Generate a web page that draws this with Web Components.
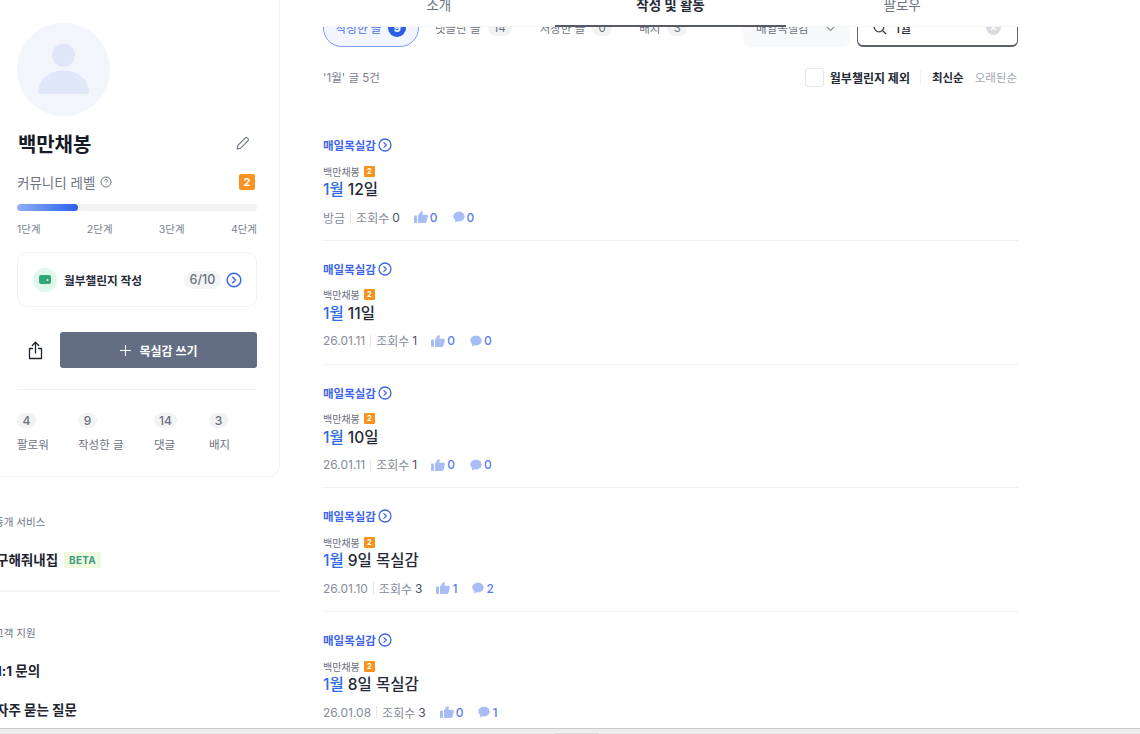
<!DOCTYPE html>
<html lang="ko">
<head>
<meta charset="utf-8">
<title>작성 및 활동</title>
<style>
  html, body { margin: 0; height: 734px; overflow: hidden; background: #fff; }
  body { font-family: Inter, "Noto Sans CJK KR", sans-serif; color: #1c2230; }
</style>
</head>
<body>
<app-page>
  <side-bar slot="side"></side-bar>
  <tab-bar slot="main"></tab-bar>
  <filter-bar slot="main"></filter-bar>
  <sort-bar slot="main"></sort-bar>
  <post-item slot="main" date="방금" views="0" likes="0" comments="0">12일</post-item>
  <post-item slot="main" date="26.01.11" views="1" likes="0" comments="0">11일</post-item>
  <post-item slot="main" date="26.01.11" views="1" likes="0" comments="0">10일</post-item>
  <post-item slot="main" date="26.01.10" views="3" likes="1" comments="2">9일 목실감</post-item>
  <post-item slot="main" date="26.01.08" views="3" likes="0" comments="1">8일 목실감</post-item>
</app-page>

<script>
let chevron = (size, color) => `
  <svg width="${size}" height="${size}" viewBox="0 0 14 14" fill="none" stroke="${color}">
    <circle cx="7" cy="7" r="6" stroke-width="1.3"/>
    <path d="M5.9 4.6 8.3 7 5.9 9.4" stroke-width="1.3" stroke-linecap="round" stroke-linejoin="round"/>
  </svg>`;

class AppPage extends HTMLElement {
  constructor() {
    super();
    this.attachShadow({ mode: 'open' });
    this.shadowRoot.innerHTML = `
      <style>
        :host { display: flex; flex-direction: column; height: 734px; overflow: hidden; }
        #cols { flex: 1; min-height: 0; display: flex; overflow: hidden; }
        #side { width: 280px; flex: none; }
        #main { position: relative; width: 695px; margin-left: 43px; flex: none; }
        #status { flex: none; height: 5px; background: #eeeeee; border-top: 1px solid #c9c9c9; position: relative; }
        #status i { position: absolute; left: 555px; width: 43px; bottom: 0; height: 1px; background: #dcdcdc; }
      </style>
      <div id="cols">
        <div id="side"><slot name="side"></slot></div>
        <div id="main"><slot name="main"></slot></div>
      </div>
      <div id="status"><i></i></div>
    `;
  }
}

class SideBar extends HTMLElement {
  constructor() {
    super();
    this.attachShadow({ mode: 'open' });
    this.shadowRoot.innerHTML = `
      <style>
        :host { display: block; width: 280px; }
        #card {
          box-sizing: border-box; height: 477px; padding: 23px 22px 0 17px;
          border-right: 1px solid #f2f3f6; border-bottom: 1px solid #f2f3f6;
          border-bottom-right-radius: 12px;
        }
        #avatar { display: block; }
        #name { display: flex; justify-content: space-between; align-items: center; margin-top: 12px; height: 30px; }
        #name b { font-size: 20px; font-weight: 700; color: #171c28; letter-spacing: -.1px; margin-left: 1px; }
        #name svg { margin-right: 7px; }
        #level { display: flex; justify-content: space-between; align-items: center; margin-top: 14px; height: 20px; }
        #level span { display: flex; align-items: center; gap: 5px; font-size: 13.5px; color: #6d7382; }
        #level em {
          width: 16px; height: 16px; border-radius: 2px; background: #f7931e; color: #fff; margin-right: 2px;
          font: 700 11px/16px Inter, sans-serif; text-align: center;
        }
        #bar { height: 7px; margin-top: 12px; border-radius: 4px; background: #f2f3f5; overflow: hidden; }
        #bar i { display: block; width: 61px; height: 7px; border-radius: 4px; background: linear-gradient(90deg, #8fb0f7, #2a5fe8); }
        #steps { display: flex; justify-content: space-between; margin-top: 11px; font-size: 10.5px; line-height: 16px; color: #7b8190; }
        #task {
          box-sizing: border-box; display: flex; align-items: center; height: 55px; margin-top: 14px;
          padding: 0 14px 0 15px; border: 1px solid #f1f2f5; border-radius: 10px;
        }
        #dot { width: 24px; height: 24px; border-radius: 50%; background: #dff8ec; display: flex; align-items: center; justify-content: center; }
        #task b { margin-left: 7px; font-size: 11.7px; font-weight: 700; color: #252b38; flex: 1; white-space: nowrap; }
        #task u {
          text-decoration: none; width: 37px; height: 18px; border-radius: 9px; background: #f3f4f6;
          font-size: 12.5px; font-weight: 500; line-height: 18px; color: #6b7280; text-align: center; margin-right: 5px;
        }
        #task svg { display: block; }
        #write { display: flex; align-items: center; margin-top: 25px; }
        #share { width: 43px; flex: none; display: flex; padding-left: 10px; box-sizing: border-box; }
        button {
          flex: 1; height: 36px; border: 0; border-radius: 3px; background: #636d83; color: #fff;
          font: 700 12px Inter, "Noto Sans CJK KR", sans-serif;
          display: flex; align-items: center; justify-content: center; gap: 7px; padding: 0;
        }
        hr { border: 0; border-top: 1px solid #eff0f4; margin: 21px 0 0; }
        #stats { display: flex; margin-top: 23px; }
        #foot { margin-left: -4px; }
        .label { font-size: 10.5px; color: #6d7382; line-height: 16px; margin-left: -2px; }
        .link { font-size: 13.5px; font-weight: 700; color: #1f2430; line-height: 20px; white-space: nowrap; }
        #beta {
          display: inline-block; margin-left: 6px; padding: 0 5px; height: 16px; background: #eef9e0;
          color: #3f9b80; font: 700 10px/16px Inter, sans-serif; vertical-align: 1px; letter-spacing: .2px;
        }
        #line { border-top: 2px solid #f5f5f6; width: 280px; margin: 20px 0 0 4px; }
      </style>
      <div id="card">
        <svg id="avatar" width="93" height="93" viewBox="0 0 93 93">
          <circle cx="46.5" cy="46.5" r="46.5" fill="#f2f5fc"/>
          <circle cx="46.5" cy="32" r="11.5" fill="#dfe7f8"/>
          <path d="M21 68.5C22 56 33 47.5 46.5 47.5S71 56 72 68.5c0 1.5-1 2.5-2.5 2.5h-46C22 71 21 70 21 68.5Z" fill="#dfe7f8"/>
        </svg>
        <div id="name">
          <b>백만채봉</b>
          <svg width="15" height="15" viewBox="0 0 16 16" fill="none" stroke="#6b7280" stroke-width="1.2" stroke-linejoin="round">
            <path d="M2.3 13.7 3 10 10.8 2.2a1.7 1.7 0 0 1 2.4 0l.6.6a1.7 1.7 0 0 1 0 2.4L6 13 2.3 13.7Z"/>
          </svg>
        </div>
        <div id="level">
          <span>커뮤니티 레벨
            <svg width="12" height="12" viewBox="0 0 12 12" fill="none" stroke="#6d7382" stroke-width="1">
              <circle cx="6" cy="6" r="5"/><path d="M4.6 4.8a1.4 1.4 0 1 1 2.2 1.1c-.5.3-.8.6-.8 1.1"/><path d="M6 8.3v.6"/>
            </svg>
          </span>
          <em>2</em>
        </div>
        <div id="bar"><i></i></div>
        <div id="steps"><span>1단계</span><span>2단계</span><span>3단계</span><span>4단계</span></div>
        <div id="task">
          <div id="dot">
            <svg width="12" height="9" viewBox="0 0 12 9"><rect width="12" height="9" rx="2" fill="#2fa877"/><circle cx="8.5" cy="5" r="1" fill="#dff8ec"/></svg>
          </div>
          <b>월부챌린지 작성</b>
          <u>6/10</u>
          ${chevron(16, '#3f66e8')}
        </div>
        <div id="write">
          <div id="share">
            <svg width="17" height="19" viewBox="0 0 17 19" fill="none" stroke="#20242e" stroke-width="1.3" stroke-linecap="round" stroke-linejoin="round">
              <path d="M5.5 7.5H2.5v10h12v-10h-3"/><path d="M8.5 12V1.5M5.3 4.5l3.2-3.2 3.2 3.2"/>
            </svg>
          </div>
          <button>
            <svg width="13" height="13" viewBox="0 0 13 13" stroke="#fff" stroke-width="1.1"><path d="M6.5 1v11M1 6.5h11"/></svg>
            목실감 쓰기
          </button>
        </div>
        <hr>
        <div id="stats">
          <stat-item style="width:61px" value="4">팔로워</stat-item>
          <stat-item style="width:76px" value="9">작성한 글</stat-item>
          <stat-item style="width:55px" value="14">댓글</stat-item>
          <stat-item value="3">배지</stat-item>
        </div>
      </div>
      <div id="foot">
        <div class="label" style="margin-top:38px">중개 서비스</div>
        <div class="link" style="margin-top:19px">구해줘내집<span id="beta">BETA</span></div>
        <div id="line"></div>
        <div class="label" style="margin-top:34px">고객 지원</div>
        <div class="link" style="margin-top:19px">1:1 문의</div>
        <div class="link" style="margin-top:19px">자주 묻는 질문</div>
      </div>
    `;
  }
}

class StatItem extends HTMLElement {
  constructor() {
    super();
    this.attachShadow({ mode: 'open' });
    this.shadowRoot.innerHTML = `
      <style>
        :host { display: block; font-size: 11.5px; color: #6d7382; }
        #v {
          display: inline-block; min-width: 9px; height: 15px; padding: 0 5px; border-radius: 8px; background: #f2f3f5;
          font-size: 12px; font-weight: 500; line-height: 15px; text-align: center; color: #6b7280;
        }
        #l { margin-top: 9px; line-height: 17px; white-space: nowrap; }
      </style>
      <div id="v"></div>
      <div id="l"><slot></slot></div>
    `;
  }
  connectedCallback() {
    this.shadowRoot.querySelector('#v').textContent = this.getAttribute('value');
  }
}

class TabBar extends HTMLElement {
  constructor() {
    super();
    this.attachShadow({ mode: 'open' });
    this.shadowRoot.innerHTML = `
      <style>
        :host {
          position: absolute; top: 0; left: -43px; right: -43px; height: 27px; z-index: 2;
          background: #fff; overflow: hidden; padding: 0 43px; box-sizing: border-box;
        }
        #row { display: grid; grid-template-columns: repeat(3, 1fr); height: 26px; border-bottom: 1px solid #f3f4f6; }
        div.t { height: 26px; text-align: center; font-size: 13.5px; line-height: 10px; color: #6d7382; box-sizing: border-box; }
        div.on { height: 27px; color: #252a36; font-weight: 700; border-bottom: 2px solid #555a66; }
      </style>
      <div id="row">
        <div class="t">소개</div>
        <div class="t on">작성 및 활동</div>
        <div class="t">팔로우</div>
      </div>
    `;
  }
}

class FilterBar extends HTMLElement {
  constructor() {
    super();
    this.attachShadow({ mode: 'open' });
    this.shadowRoot.innerHTML = `
      <style>
        :host { display: flex; align-items: center; padding-top: 9px; height: 38px; font-size: 11.5px; color: #6d7382; }
        .f { display: flex; align-items: center; gap: 7px; white-space: nowrap; }
        .f i {
          font-style: normal; min-width: 8px; height: 16px; padding: 0 6px; border-radius: 8px;
          background: #f2f3f5; font-size: 11.5px; line-height: 16px; text-align: center;
        }
        #on {
          box-sizing: border-box; width: 96px; height: 38px; justify-content: center;
          border: 1px solid #7b9cf5; border-radius: 19px; background: #f3f6ff; color: #4a6fd8;
        }
        #on i { background: #2a5fe8; color: #fff; font-weight: 700; min-width: 18px; padding: 0; height: 18px; border-radius: 9px; line-height: 18px; }
        #drop {
          box-sizing: border-box; display: flex; align-items: center; justify-content: space-between;
          width: 107px; height: 38px; margin-left: auto; padding: 0 14px 0 13px;
          background: #f8f9fa; border-radius: 8px;
        }
        #search {
          box-sizing: border-box; display: flex; align-items: center; width: 161px; height: 38px; margin-left: 7px;
          padding: 0 16px 0 15px; border: 1px solid #5a5f6a; border-bottom-width: 2px; border-radius: 6px; color: #1f2430;
          font-size: 12px; font-weight: 500;
        }
        #search span { flex: 1; margin-left: 8px; }
      </style>
      <div class="f" id="on">작성한 글 <i>9</i></div>
      <div class="f" style="margin-left:16px">댓글단 글 <i>14</i></div>
      <div class="f" style="margin-left:28px">저장한 글 <i>0</i></div>
      <div class="f" style="margin-left:27px">배지 <i>3</i></div>
      <div id="drop">매일목실감
        <svg width="11" height="7" viewBox="0 0 11 7" fill="none" stroke="#8a8f9b" stroke-width="1.2"><path d="M1 1l4.500 4.500L10 1"/></svg>
      </div>
      <div id="search">
        <svg width="14" height="14" viewBox="0 0 14 14" fill="none" stroke="#3b404c" stroke-width="1.3"><circle cx="6" cy="6" r="4.8"/><path d="M9.5 9.5 13 13"/></svg>
        <span>1월</span>
        <svg width="15" height="15" viewBox="0 0 15 15"><circle cx="7.5" cy="7.5" r="7.5" fill="#d9dbe0"/><path d="M5 5l5 5M10 5l-5 5" stroke="#fff" stroke-width="1.3"/></svg>
      </div>
    `;
  }
}

class SortBar extends HTMLElement {
  constructor() {
    super();
    this.attachShadow({ mode: 'open' });
    this.shadowRoot.innerHTML = `
      <style>
        :host { display: flex; align-items: center; height: 20px; margin: 20px 0 30px; padding-right: 1px; font-size: 11.5px; color: #7b8190; }
        #count { flex: 1; }
        #box { box-sizing: border-box; width: 19px; height: 19px; border: 1px solid #e4e6ea; border-radius: 3px; }
        b { font-weight: 700; color: #252a36; }
        #sep { width: 1px; height: 14px; background: #f0f1f3; margin: 0 11px 0 10px; }
      </style>
      <div id="count">'1월' 글 5건</div>
      <div id="box"></div>
      <b style="margin-left:6px;font-size:12px">월부챌린지 제외</b>
      <div id="sep"></div>
      <b>최신순</b>
      <span style="margin-left:11px;color:#a3a8b3">오래된순</span>
    `;
  }
}

class PostItem extends HTMLElement {
  constructor() {
    super();
    this.attachShadow({ mode: 'open' });
    this.shadowRoot.innerHTML = `
      <style>
        :host {
          display: block; box-sizing: border-box; height: 123.8px; padding-top: 19px;
          border-bottom: 1px solid #eff0f3;
        }
        #cat { display: flex; align-items: center; gap: 2px; height: 18px; font-size: 11.5px; font-weight: 700; color: #3f66e8; }
        #cat svg { display: block; }
        #who { display: flex; align-items: center; gap: 4px; height: 14px; margin-top: 10px; font-size: 10px; color: #6d7382; }
        #who em { width: 11px; height: 11px; border-radius: 1px; background: #f7931e; color: #fff; font: 700 7.5px/11px Inter, sans-serif; text-align: center; }
        #title { height: 22px; margin-top: 1px; font-size: 15.5px; font-weight: 500; line-height: 22px; color: #252a36; }
        #title span { color: #2f6ae6; }
        #meta { display: flex; align-items: center; height: 18px; margin-top: 7px; font-size: 12px; color: #858b99; }
        #meta i { width: 1px; height: 12px; background: #e4e6ea; margin: 0 5px; }
        #meta b { font-weight: 400; color: #4b5263; margin-left: 3px; }
        .n { font-weight: 500; color: #5a7ee8; margin-left: 2px; }
        .ic { display: flex; align-items: center; }
      </style>
      <div id="cat">매일목실감 ${chevron(14, '#3f66e8')}</div>
      <div id="who">백만채봉 <em>2</em></div>
      <div id="title"><span>1월</span> <slot></slot></div>
      <div id="meta">
        <span id="date"></span><i></i><span>조회수</span><b id="views"></b>
        <div class="ic" style="margin-left:14px">
          <svg width="14" height="12" viewBox="0 0 14 12" fill="#a9bdf5"><rect x="0" y="4.5" width="3" height="7.5" rx=".7"/><path d="M4 4.5 6.8.4c1.2-.7 2.300.1 2 1.300L8.300 3.800h4.200c1 0 1.500.8 1.300 1.600l-1.200 5.400c-.2.700-.7 1.200-1.500 1.200H4Z"/></svg>
          <span class="n" id="likes"></span>
        </div>
        <div class="ic" style="margin-left:15px">
          <svg width="12" height="12" viewBox="0 0 12 12" fill="#a9bdf5"><path d="M6 .8c3.2 0 5.700 2.100 5.700 4.800S9.200 10.400 6 10.400c-.6 0-1.200-.1-1.700-.2L1.800 11.500l.5-2.500C1 8.100.3 6.900.3 5.600.3 2.900 2.800.8 6 .8Z"/></svg>
          <span class="n" id="comments"></span>
        </div>
      </div>
    `;
  }
  connectedCallback() {
    for (let k of ['date', 'views', 'likes', 'comments']) {
      this.shadowRoot.querySelector('#' + k).textContent = this.getAttribute(k);
    }
  }
}

customElements.define('app-page', AppPage);
customElements.define('side-bar', SideBar);
customElements.define('stat-item', StatItem);
customElements.define('tab-bar', TabBar);
customElements.define('filter-bar', FilterBar);
customElements.define('sort-bar', SortBar);
customElements.define('post-item', PostItem);
</script>
</body>
</html>
